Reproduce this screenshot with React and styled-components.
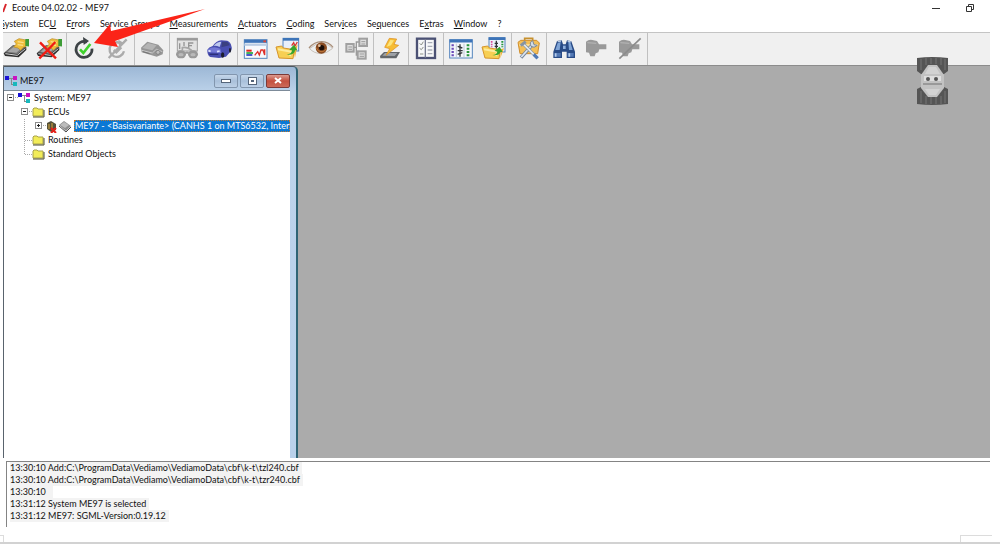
import React from 'react';
import styled, { createGlobalStyle } from 'styled-components';

const GlobalStyle = createGlobalStyle`
  * {
    box-sizing: border-box;
  }
  body {
    margin: 0;
    background: #ffffff;
    color: #111111;
    font-family: Lato, Roboto, sans-serif;
    font-size: 9px;
    line-height: 12px;
  }
  button {
    font: inherit;
    color: inherit;
    border: 0;
    padding: 0;
    background: none;
  }
  ul, ol {
    list-style: none;
    margin: 0;
    padding: 0;
  }
  svg {
    display: block;
    flex: none;
  }
`;

const Page = styled.div`
  position: relative;
  display: flex;
  flex-direction: column;
  min-height: 100vh;
  overflow: hidden;
`;

const TitleBar = styled.header`
  display: flex;
  align-items: center;
  height: 16px;
  padding: 0 26px 0 3px;
`;

const Title = styled.h1`
  margin: 0 auto 0 4px;
  font-size: 9px;
  font-weight: 400;
`;

const WindowControl = styled.button`
  display: grid;
  place-items: center;
  width: 34px;
  height: 14px;
  margin-right: ${(props) => (props.$last ? '-13px' : '0')};
`;

const MenuBar = styled.nav`
  display: flex;
  align-items: center;
  gap: 10px;
  height: 16px;
  margin-left: 3px;
  overflow: hidden;
`;

const MenuItem = styled.button`
  white-space: nowrap;
  margin-left: ${(props) => (props.$first ? '-3px' : '0')};
`;

const ToolBar = styled.div`
  display: flex;
  height: 34px;
  margin: 0 10px 0 3px;
  overflow: hidden;
  background: #f0f0f0;
  border-top: 1px solid #c4c4c4;
  border-bottom: 1px solid #8c8c8c;
`;

const ToolGroup = styled.div`
  display: flex;
  border-right: 1px solid #c0c0c0;
  padding-right: 1px;
  &:first-child {
    margin-left: -4px;
  }
`;

const ToolButton = styled.button`
  display: grid;
  place-items: center;
  width: 33px;
  height: 31px;
`;

const Workspace = styled.main`
  display: flex;
  flex: 1;
  margin: 0 10px 0 3px;
  background: #ababab;
`;

const ChildWindow = styled.section`
  display: flex;
  flex-direction: column;
  width: 295px;
  padding-right: 6px;
  background: linear-gradient(#9db8d6, #bdd3ea 26px, #b9d1ea);
  border-top: 1px solid #4e5860;
  border-left: 1px solid #59636d;
  border-right: 2px solid #2f6474;
  border-top-right-radius: 5px;
`;

const ChildTitleBar = styled.header`
  display: flex;
  align-items: center;
  gap: 2px;
  height: 23px;
  padding-top: 4px;
`;

const ChildTitle = styled.h2`
  margin: 0 auto 0 0;
  font-size: 9px;
  font-weight: 400;
`;

const ChildControl = styled.button`
  display: grid;
  place-items: center;
  width: 24px;
  height: 14px;
  border: 1px solid ${(props) => (props.$close ? '#7c3a38' : '#8296ae')};
  border-radius: 2px;
  background: ${(props) =>
    props.$close
      ? 'linear-gradient(#dc9a90, #c4503f 50%, #cc6a58)'
      : 'linear-gradient(#c6d7ea, #a9c0da 50%, #bdd0e6)'};
`;

const Tree = styled.ul`
  flex: 1;
  background: #ffffff;
  border-top: 1px solid #7d8b99;
  overflow: hidden;
`;

const TreeRow = styled.li`
  display: flex;
  align-items: center;
  height: 14px;
  white-space: nowrap;
`;

const TreeCell = styled.span`
  width: ${(props) => (props.$root ? '13px' : '14px')};
`;

const TreeLabel = styled.span`
  margin-left: 3px;
  ${(props) =>
    props.$selected &&
    `
    flex: 1;
    overflow: hidden;
    margin-left: 2px;
    padding-left: 1px;
    color: #ffffff;
    background: #0b78d4;
    outline: 1px dotted #c27a30;
    outline-offset: -1px;
  `}
`;

const Log = styled.ol`
  height: 66px;
  margin: 3px 10px 0 6px;
  padding: 0 0 0 3px;
  border-top: 1px solid #848484;
  border-left: 1px solid #848484;
`;

const LogLine = styled.li`
  height: 12px;
  white-space: pre;
`;

const LogText = styled.span`
  display: inline-block;
  height: 12px;
  padding-right: 3px;
  background: #f3f3f3;
`;

const StatusBar = styled.footer`
  display: flex;
  justify-content: space-between;
  height: 9px;
  margin-top: 8px;
  padding-right: 8px;
  border-bottom: 2px solid #d2d2d2;
`;

const StatusCell = styled.span`
  width: ${(props) => props.$width}px;
  border-top: 1px solid #dcdcdc;
  border-left: ${(props) => (props.$end ? '1px solid #dcdcdc' : '0')};
  border-right: ${(props) => (props.$end ? '0' : '1px solid #dcdcdc')};
`;

const Pointer = styled.svg`
  position: absolute;
  top: 0;
  left: 90px;
  pointer-events: none;
`;

const Badge = styled.svg`
  position: absolute;
  top: 56px;
  right: 51px;
`;

const Icon = ({ children }) => (
  <svg width="26" height="26" viewBox="0 0 78 78" fill="none" aria-hidden="true">
    {children}
  </svg>
);

const Device = () => (
  <>
    <path d="M2 52 L30 28 L70 34 L70 42 L47 64 L6 60Z" fill="#2f2f2f" />
    <path d="M6 49 L31 28 L66 34 L44 55Z" fill="#777" />
    <path d="M14 47 L32 32 L56 36 L40 50Z" fill="#a6a6a6" />
    <path d="M7 53 L43 58 L67 38" stroke="#d4d4d4" strokeWidth="3" />
    <path d="M34 16 L48 8 L69 12 V32 L61 34 L53 43 L45 36 L32 33 L40 24Z" fill="#efbd3a" stroke="#b98a22" strokeWidth="2" />
    <path d="M44 17 L62 20 M44 26 L60 28" stroke="#fbe08a" strokeWidth="4" />
    <path d="M67 9 H79 V32 L67 30Z" fill="#3d9c36" />
  </>
);

const ConnectIcon = () => <Icon><Device /></Icon>;

const DisconnectIcon = () => (
  <Icon>
    <Device />
    <path d="M12 19 Q30 38 60 67 M58 18 Q38 40 10 67" stroke="#f01c14" strokeWidth="7" />
  </Icon>
);

const RefreshIcon = () => (
  <Icon>
    <path d="M48 18 A24 24 0 1 0 63 38" stroke="#3d4346" strokeWidth="8" />
    <path d="M36 3 L54 15 L38 27Z" fill="#3d4346" />
    <path d="M27 40 L37 51 L58 24" stroke="#3fd22c" strokeWidth="8" />
  </Icon>
);

const RefreshOffIcon = () => (
  <Icon>
    <path d="M54 25 A22 22 0 1 0 60 46" stroke="#ababab" strokeWidth="7" />
    <path d="M43 11 L61 22 L45 30Z" fill="#ababab" />
    <path d="M29 42 L37 49 L52 34 M14 66 L68 10" stroke="#ababab" strokeWidth="7" />
  </Icon>
);

const ModuleIcon = () => (
  <Icon>
    <path d="M6 35 L25 17 L58 26 L73 43 L71 55 L53 62 L8 49Z" fill="#969696" />
    <path d="M10 36 L27 21 L53 28 L40 43Z" fill="#b4b4b4" />
    <path d="M8 43 L40 51 L52 40 L70 47" stroke="#c9c9c9" strokeWidth="3" />
    <circle cx="57" cy="49" r="6" fill="#bcbcbc" stroke="#777" strokeWidth="2" />
    <path d="M12 47 L32 53" stroke="#737373" strokeWidth="3" />
  </Icon>
);

const IdentIcon = () => (
  <Icon>
    <rect x="10" y="7" width="60" height="38" fill="#e2e2e2" stroke="#a0a0a0" strokeWidth="3" />
    <path d="M9 10 H71" stroke="#9a9a9a" strokeWidth="7" />
    <path d="M17 22 V39 M30 18 V30 M44 38 V21 H58 M44 29 H54" stroke="#959595" strokeWidth="4" />
    <path d="M25 43 V35 Q39 31 53 43" stroke="#a6a6a6" strokeWidth="5" />
    <ellipse cx="21" cy="55" rx="15" ry="12" fill="#999" />
    <ellipse cx="57" cy="55" rx="15" ry="12" fill="#999" />
    <path d="M34 52 Q39 47 44 52" stroke="#999" strokeWidth="5" />
    <ellipse cx="21" cy="56" rx="8" ry="5" fill="#b9b9b9" />
    <ellipse cx="57" cy="56" rx="8" ry="5" fill="#b9b9b9" />
  </Icon>
);

const CarIcon = () => (
  <Icon>
    <path d="M1 41 Q5 33 17 30 Q27 15 43 13 L61 14 Q72 20 73 30 Q77 40 70 47 L57 62 L36 66 L10 63 Q0 58 1 41Z" fill="#484eb0" />
    <path d="M4 40 Q18 28 40 38 L43 51 L5 49Z" fill="#7479d6" />
    <path d="M19 30 Q30 17 43 17 L38 33Q27 28 19 30Z" fill="#bec9ee" />
    <path d="M45 17 L60 17 Q66 21 68 28 L43 34Z" fill="#3a4080" />
    <path d="M7 55 H34" stroke="#2b2f78" strokeWidth="4" />
    <path d="M4 44 L11 46 M30 47 L38 45" stroke="#dfe4ff" strokeWidth="5" />
    <ellipse cx="47" cy="57" rx="5" ry="8" fill="#1c1d2d" />
    <ellipse cx="69" cy="43" rx="3" ry="7" fill="#1c1d2d" />
  </Icon>
);

const MeasureIcon = () => (
  <Icon>
    <rect x="7" y="11" width="68" height="56" fill="#f7f9fc" stroke="#5686be" strokeWidth="3" />
    <path d="M7 16 H75" stroke="#3d74b8" strokeWidth="9" />
    <path d="M64 16 H72" stroke="#d7493d" strokeWidth="6" />
    <path d="M7 26 H75" stroke="#b9cce4" strokeWidth="7" />
    <path d="M13 44 H29" stroke="#e2231a" strokeWidth="6" />
    <path d="M13 51 H33" stroke="#22a53a" strokeWidth="5" />
    <path d="M13 57 H31" stroke="#2338c2" strokeWidth="5" />
    <path d="M38 58 L47 47 L52 57 L57 42 L63 42 L68 57 V40" stroke="#de2f28" strokeWidth="4" />
  </Icon>
);

const folderFront = 'M3 33 L20 30 L25 36 L58 41 L54 68 L12 66Z';

const MeasureOpenIcon = () => (
  <Icon>
    <rect x="24" y="7" width="47" height="38" fill="#e9f0fa" stroke="#5686be" strokeWidth="3" />
    <path d="M24 10 H72" stroke="#3d74b8" strokeWidth="8" />
    <path d="M50 29 L56 20 L60 30 L67 18" stroke="#d8372f" strokeWidth="4" />
    <path d={folderFront} fill="#f7cf54" stroke="#d6952c" strokeWidth="3" />
    <path d="M9 40 L49 47 L45 60" stroke="#fdeb9d" strokeWidth="6" />
    <path d="M60 65 L68 25 L61 32 L53 35Z" fill="#eeb53c" />
    <path d="M35 56 Q50 54 51 43 L43 41 L57 26 L67 43 L60 43 Q59 58 35 56Z" fill="#36a42d" />
  </Icon>
);

const EyeIcon = () => (
  <Icon>
    <path d="M3 36 Q20 16 42 17 Q63 18 75 34" stroke="#a88e78" strokeWidth="4" />
    <path d="M5 38 Q21 22 42 22 Q62 23 73 38 Q55 53 38 53 Q18 52 5 38Z" fill="#eef0f0" stroke="#b6aaa0" strokeWidth="2" />
    <circle cx="40" cy="36" r="17" fill="#8a4c22" />
    <circle cx="41" cy="35" r="8" fill="#1b0e08" />
    <circle cx="34" cy="29" r="4" fill="#e2c3a4" />
    <path d="M25 35 A16 16 0 0 0 55 38" stroke="#bd7638" strokeWidth="3" />
  </Icon>
);

const NetworkIcon = () => (
  <Icon>
    <path d="M31 34 H40 M40 34 V18 H48 M40 34 V57 H46" stroke="#999" strokeWidth="4" />
    <g fill="#dedede" stroke="#a0a0a0" strokeWidth="6">
      <rect x="10" y="24" width="22" height="23" />
      <rect x="49" y="8" width="23" height="22" />
      <rect x="44" y="46" width="24" height="22" />
    </g>
    <path d="M16 33 H27 M16 40 H27 M55 17 H67 M55 24 H67 M50 54 H63 M50 61 H63" stroke="#999" strokeWidth="3" />
  </Icon>
);

const FlashIcon = () => (
  <Icon>
    <path d="M6 60 L18 48 H66 L55 67 H7Z" fill="#62666a" />
    <path d="M13 59 L21 51 H58 L50 60Z" fill="#9da1a6" />
    <path d="M34 7 L56 9 L48 25 L62 28 L24 58 L35 38 L20 34Z" fill="#f7bd35" stroke="#d98b1c" strokeWidth="2" />
    <path d="M37 12 L48 13 L39 28 L26 32Z" fill="#fce47c" />
  </Icon>
);

const BookIcon = () => (
  <Icon>
    <rect x="12" y="8" width="54" height="58" fill="#f7f8f8" stroke="#4b5174" strokeWidth="7" />
    <path d="M37 10 V65" stroke="#777c91" strokeWidth="4" />
    <path d="M20 22 L25 27 L31 17 M20 37 L25 41 L31 33 M21 54 H31" stroke="#8c9087" strokeWidth="3" />
    <path d="M44 20 H58 M44 31 H58 M44 42 H58 M44 53 H58" stroke="#a9acb6" strokeWidth="4" />
  </Icon>
);

const TableIcon = () => (
  <Icon>
    <rect x="5" y="11" width="68" height="55" fill="#f4f7fb" stroke="#5686be" strokeWidth="3" />
    <path d="M5 15 H73" stroke="#3d74b8" strokeWidth="9" />
    <path d="M14 25 V62" stroke="#6b4bb8" strokeWidth="7" strokeDasharray="6 4" />
    <path d="M60 25 V62" stroke="#27953a" strokeWidth="8" strokeDasharray="6 4" />
    <path d="M25 23 V64 M48 23 V64" stroke="#bfc8d5" strokeWidth="3" />
    <path d="M36 25 V62" stroke="#32363a" strokeWidth="4" />
    <path d="M29 31 L43 36 M29 44 H44 M29 55 L43 50" stroke="#32363a" strokeWidth="4" />
  </Icon>
);

const TableOpenIcon = () => (
  <Icon>
    <rect x="24" y="5" width="48" height="43" fill="#edf2fa" stroke="#5686be" strokeWidth="3" />
    <path d="M23 8 H73" stroke="#3d74b8" strokeWidth="8" />
    <path d="M32 15 V34" stroke="#d64b96" strokeWidth="5" strokeDasharray="5 3" />
    <path d="M46 14 V38 M41 22 H51 M41 31 H51" stroke="#32363a" strokeWidth="4" />
    <path d="M64 15 V34" stroke="#27953a" strokeWidth="6" strokeDasharray="5 3" />
    <path d={folderFront} fill="#f7cf54" stroke="#d6952c" strokeWidth="3" />
    <path d="M9 40 L49 47 L45 60" stroke="#fdeb9d" strokeWidth="6" />
    <path d="M58 67 L69 37 L59 40Z" fill="#eeb53c" />
    <path d="M34 57 Q48 55 49 47 L41 44 L56 32 L65 48 L58 48 Q55 60 34 57Z" fill="#36a42d" />
  </Icon>
);

const ToolboxIcon = () => (
  <Icon>
    <path d="M26 15 V7 H50 V15" stroke="#c6902d" strokeWidth="5" />
    <path d="M6 19 L14 13 H62 L70 21 L65 53 H12Z" fill="#f4bf57" stroke="#d08e2c" strokeWidth="3" />
    <path d="M10 27 H66" stroke="#fde1a0" strokeWidth="5" />
    <path d="M15 65 L50 25" stroke="#76859a" strokeWidth="10" />
    <path d="M16 63 L50 25" stroke="#dce6ef" strokeWidth="5" />
    <path d="M50 14 Q39 18 45 31 Q54 38 64 28 L54 26Z" fill="#d2dce6" stroke="#7b8795" strokeWidth="3" />
    <path d="M21 23 L64 66" stroke="#8592a1" strokeWidth="9" />
    <path d="M23 25 L54 56" stroke="#e4ebf1" strokeWidth="5" />
    <path d="M53 55 L65 67" stroke="#4f79b6" strokeWidth="9" />
    <path d="M14 29 L29 17" stroke="#8794a2" strokeWidth="9" />
  </Icon>
);

const FindIcon = () => (
  <Icon>
    <path d="M18 15 L32 13 L36 25 H44 L48 13 L61 16 L72 47 V66 H47 V47 H33 V66 H7 V47Z" fill="#294b86" />
    <path d="M20 21 L29 18 L26 42 H13Z M52 18 L58 19 L65 42 H54Z" fill="#7fa4d6" />
    <path d="M10 51 H29 V62 H10Z M50 51 H68 V62 H50Z" fill="#5379b5" />
    <path d="M14 52 V62 M55 52 V62" stroke="#b7cdec" strokeWidth="5" />
    <path d="M36 29 H44 V39 H36Z" fill="#91b1dd" />
    <path d="M20 17 L30 15 M50 15 L59 18" stroke="#b9cbe4" strokeWidth="4" />
  </Icon>
);

const plug = 'M6 17 Q14 10 25 12 L39 15 L45 25 H67 V40 H46 L43 49 L35 52 L32 61 H19 L15 50 L6 49Z';

const PlugIcon = () => (
  <Icon>
    <path d={plug} fill="#999" />
    <path d="M10 20 L37 22" stroke="#b2b2b2" strokeWidth="4" />
  </Icon>
);

const UnplugIcon = () => (
  <Icon>
    <path d={plug} fill="#999" />
    <path d="M10 20 L37 22" stroke="#b2b2b2" strokeWidth="4" />
    <path d="M7 68 L71 7" stroke="#8c8c8c" strokeWidth="5" />
  </Icon>
);

const SystemIcon = () => (
  <svg width="14" height="12" viewBox="0 0 14 12" shapeRendering="crispEdges" aria-hidden="true">
    <path d="M5 3 H9 M7 3 V9 H9" stroke="#8a8a8a" fill="none" />
    <rect x="1" y="1" width="4" height="4" fill="#1a12d6" />
    <rect x="9" y="1" width="4" height="4" fill="#c913c3" />
    <rect x="9" y="7" width="4" height="4" fill="#18b8bd" />
  </svg>
);

const FolderIcon = () => (
  <svg width="13" height="11" viewBox="0 0 13 11" aria-hidden="true">
    <path d="M1 2 L2 1 H5 L6 2 H11 V9 H1Z" fill="#f2ec58" stroke="#a8a24a" />
    <path d="M1 10 H12 V3" stroke="#4a4a2c" fill="none" />
  </svg>
);

const EcuIcon = () => (
  <svg width="26" height="13" viewBox="0 0 26 13" aria-hidden="true">
    <path d="M1 3 L5 1 L10 4 V10 L5 12 L1 9Z" fill="#55513a" />
    <path d="M3 4 V9 M6 3 V10" stroke="#d9a93a" strokeWidth="1" />
    <path d="M5 8 L10 13 M10 8 L5 13" stroke="#e3201a" strokeWidth="2" />
    <path d="M13 5 L18 1 L25 6 L20 11Z" fill="#8e8e8e" />
    <path d="M14 5 L18 2 L23 5 L19 8Z" fill="#bcbcbc" />
    <path d="M13 6 L20 12 L25 7" stroke="#4c4c4c" fill="none" />
  </svg>
);

const Toggle = ({ open }) => (
  <button type="button" aria-label={open ? 'Collapse' : 'Expand'}>
    <svg width="14" height="14" viewBox="0 0 14 14" shapeRendering="crispEdges">
      <path d="M11 7.5 H14" stroke="#a8a8a8" strokeDasharray="1 1" />
      <rect x="3.5" y="4.5" width="6" height="6" fill="#fff" stroke="#8c8c8c" />
      <path d={open ? 'M5 7.5 H8' : 'M5 7.5 H8 M6.5 6 V9'} stroke="#222" />
    </svg>
  </button>
);

const Branch = ({ last }) => (
  <svg width="14" height="14" viewBox="0 0 14 14" shapeRendering="crispEdges" aria-hidden="true">
    <path d={last ? 'M6.5 0 V7.5 H14' : 'M6.5 0 V14 M6.5 7.5 H14'} stroke="#a8a8a8" fill="none" strokeDasharray="1 1" />
  </svg>
);

const Line = () => (
  <svg width="14" height="14" viewBox="0 0 14 14" shapeRendering="crispEdges" aria-hidden="true">
    <path d="M6.5 0 V14" stroke="#a8a8a8" strokeDasharray="1 1" />
  </svg>
);

// [text before the access key, access key, text after it]
const menus = [
  ['', 'S', 'ystem'],
  ['EC', 'U', ''],
  ['E', 'r', 'rors'],
  ['Service ', 'G', 'roups'],
  ['', 'M', 'easurements'],
  ['', 'A', 'ctuators'],
  ['', 'C', 'oding'],
  ['Serv', 'i', 'ces'],
  ['Se', 'q', 'uences'],
  ['E', 'x', 'tras'],
  ['', 'W', 'indow'],
  ['?', '', ''],
];

const tools = [
  [['Connect', ConnectIcon], ['Disconnect', DisconnectIcon]],
  [['Initialise', RefreshIcon], ['Stop', RefreshOffIcon]],
  [['Module', ModuleIcon]],
  [['Identification', IdentIcon], ['Vehicle', CarIcon]],
  [['Measurement', MeasureIcon], ['Open measurement', MeasureOpenIcon], ['Watch', EyeIcon]],
  [['Network', NetworkIcon]],
  [['Flash', FlashIcon]],
  [['Coding', BookIcon]],
  [['Table', TableIcon], ['Open table', TableOpenIcon]],
  [['Options', ToolboxIcon]],
  [['Find', FindIcon], ['Plug', PlugIcon], ['Unplug', UnplugIcon]],
];

const log = [
  '13:30:10 Add:C:\\ProgramData\\Vediamo\\VediamoData\\cbf\\k-t\\tzl240.cbf',
  '13:30:10 Add:C:\\ProgramData\\Vediamo\\VediamoData\\cbf\\k-t\\tzr240.cbf',
  '13:30:10  ',
  '13:31:12 System ME97 is selected',
  '13:31:12 ME97: SGML-Version:0.19.12',
];

const App = () => {
  return (
    <>
      <GlobalStyle />
      <Page>
        <TitleBar>
          <svg width="5" height="10" viewBox="0 0 5 10" aria-hidden="true">
            <path d="M0 9 L3 1" stroke="#d8252b" strokeWidth="2" />
          </svg>
          <Title>Ecoute 04.02.02 - ME97</Title>
          <WindowControl type="button" aria-label="Minimize">
            <svg width="8" height="8"><path d="M0 4.5 H8" stroke="#333" /></svg>
          </WindowControl>
          <WindowControl type="button" aria-label="Restore" $last>
            <svg width="8" height="8" fill="none" stroke="#333">
              <path d="M0.5 2.5 H5.5 V7.5 H0.5Z M2.5 2 V0.5 H7.5 V5.5 H6" />
            </svg>
          </WindowControl>
        </TitleBar>
        <MenuBar>
          {menus.map(([before, key, after], i) => (
            <MenuItem key={before + key + after} type="button" $first={i === 0}>
              {before}<u>{key}</u>{after}
            </MenuItem>
          ))}
        </MenuBar>
        <ToolBar role="toolbar">
          {tools.map((group, i) => (
            <ToolGroup key={i}>
              {group.map(([name, Glyph]) => (
                <ToolButton key={name} type="button" aria-label={name}>
                  <Glyph />
                </ToolButton>
              ))}
            </ToolGroup>
          ))}
        </ToolBar>
        <Workspace>
          <ChildWindow>
            <ChildTitleBar>
              <SystemIcon />
              <ChildTitle>ME97</ChildTitle>
              <ChildControl type="button" aria-label="Minimize window">
                <svg width="10" height="6"><rect x="0.5" y="1.5" width="9" height="3" fill="#fff" stroke="#55657a" /></svg>
              </ChildControl>
              <ChildControl type="button" aria-label="Maximize window">
                <svg width="9" height="8">
                  <rect x="0.5" y="0.5" width="8" height="7" fill="#fff" stroke="#55657a" />
                  <rect x="3" y="3" width="3" height="2" fill="#55657a" />
                </svg>
              </ChildControl>
              <ChildControl type="button" aria-label="Close window" $close>
                <svg width="8" height="7"><path d="M1 1 L7 6 M7 1 L1 6" stroke="#fff" strokeWidth="2" /></svg>
              </ChildControl>
            </ChildTitleBar>
            <Tree>
              <TreeRow>
                <TreeCell $root><Toggle open /></TreeCell>
                <SystemIcon />
                <TreeLabel>System: ME97</TreeLabel>
              </TreeRow>
              <TreeRow>
                <TreeCell />
                <TreeCell><Toggle open /></TreeCell>
                <FolderIcon />
                <TreeLabel>ECUs</TreeLabel>
              </TreeRow>
              <TreeRow>
                <TreeCell />
                <TreeCell><Line /></TreeCell>
                <TreeCell><Toggle /></TreeCell>
                <EcuIcon />
                <TreeLabel $selected>ME97 - &lt;Basisvariante&gt; (CANHS 1 on MTS6532, Interfa</TreeLabel>
              </TreeRow>
              <TreeRow>
                <TreeCell />
                <TreeCell><Branch /></TreeCell>
                <FolderIcon />
                <TreeLabel>Routines</TreeLabel>
              </TreeRow>
              <TreeRow>
                <TreeCell />
                <TreeCell><Branch last /></TreeCell>
                <FolderIcon />
                <TreeLabel>Standard Objects</TreeLabel>
              </TreeRow>
            </Tree>
          </ChildWindow>
        </Workspace>
        <Log>
          {log.map((line, i) => (
            <LogLine key={i}><LogText>{line}</LogText></LogLine>
          ))}
        </Log>
        <StatusBar>
          <StatusCell $width={4} />
          <StatusCell $width={32} $end />
        </StatusBar>
        <Badge width="33" height="50" viewBox="0 0 33 50" aria-hidden="true">
          <path d="M1 2 Q16 0 32 2 V15 L28 18 H5 L1 15Z M1 33 L5 31 H28 L32 33 V48 Q16 50 1 48Z" fill="#555" />
          <path d="M5 3 V14 M10 2 V9 M15 2 V8 M20 2 V8 M25 2 V9 M29 3 V14 M5 35 V47 M10 40 V48 M15 41 V48 M20 41 V48 M25 40 V48 M29 35 V47" stroke="#777" strokeWidth="1" />
          <path d="M12 9 H21 L28 19 V32 L21 41 H12 L5 32 V19Z" fill="#c2c2c2" />
          <path d="M13 11 H20 L24 18 H9Z M9 33 H24 L20 39 H13Z" fill="#d2d2d2" />
          <path d="M8 20 H25 V25 H8Z" fill="#dedede" />
          <circle cx="12" cy="23" r="2" fill="#555" />
          <circle cx="20" cy="23" r="2" fill="#555" />
          <path d="M7 28 H26" stroke="#999" strokeWidth="2" />
        </Badge>
        <Pointer width="120" height="50" viewBox="0 0 120 50" aria-hidden="true">
          <path d="M4 43 L20 24 L21 31 L115 9 L25 41 L28 47Z" fill="#fb2418" />
        </Pointer>
      </Page>
    </>
  );
};

export default App;
